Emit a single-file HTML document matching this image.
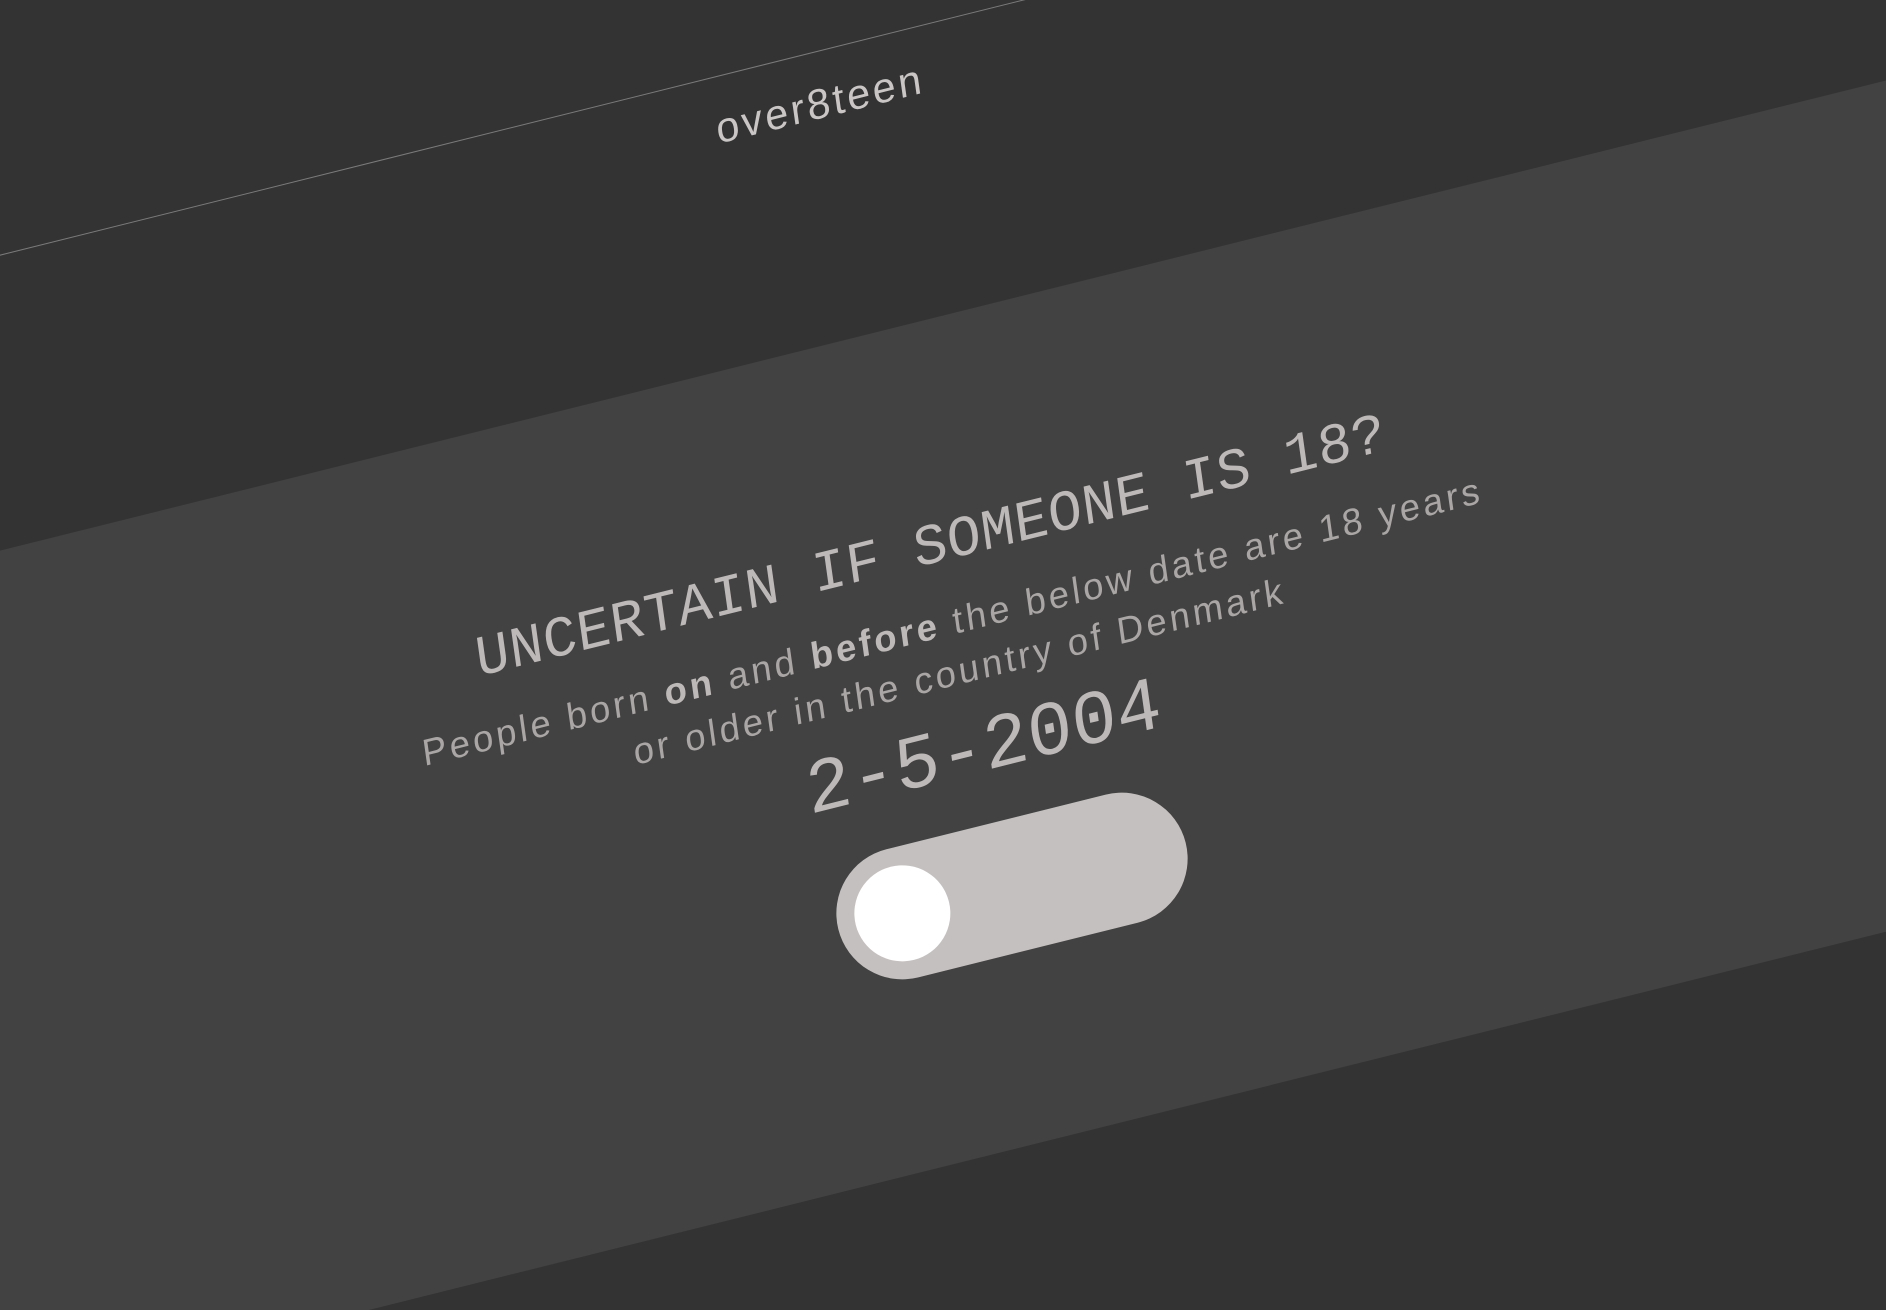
<!DOCTYPE html>
<html><head><meta charset="utf-8"><style>
html,body{margin:0;padding:0;width:1886px;height:1310px;overflow:hidden;background:#333333}
.wrap{position:relative;width:1886px;height:1310px;overflow:hidden;background:#333333}
.band{position:absolute;left:-1000px;top:800px;width:5000px;height:826px;background:#424242;transform-origin:0 0;transform:rotate(-14deg)}
.line{position:absolute;left:-1000px;top:504px;width:5000px;height:1px;background:#7a7a7a;transform-origin:0 0;transform:rotate(-14deg)}
.c{position:absolute;transform:translate(-50%,-50%) rotate(-14deg) skewX(-6deg);white-space:nowrap;text-align:center}
.logo{left:820px;top:104px;font-family:"Liberation Sans",sans-serif;font-size:42px;letter-spacing:3px;color:#c9c6c5}
.h{left:931px;top:549px;font-family:"Liberation Mono",monospace;font-size:57px;color:#bdb9b8;letter-spacing:0.5px}
.sub{left:956px;top:647px;font-family:"Liberation Sans",sans-serif;font-size:37px;letter-spacing:3.3px;line-height:50px;color:#a9a6a5}
.sub b{color:#bdb9b8}
.date{left:984px;top:750px;font-family:"Liberation Mono",monospace;font-size:76px;color:#bdb9b8}
.tog{position:absolute;left:1012px;top:886px;width:358px;height:132px;border-radius:66px;background:#c4c0bf;transform:translate(-50%,-50%) rotate(-14deg)}
.knob{position:absolute;left:18px;top:18px;width:96px;height:96px;border-radius:50%;background:#fff}
</style></head><body><div class="wrap">
<div class="band"></div>
<div class="line"></div>
<div class="c logo">over8teen</div>
<div class="c h">UNCERTAIN IF SOMEONE IS 18?</div>
<div class="c sub">People born <b>on</b> and <b>before</b> the below date are 18 years<br>or older in the country of Denmark</div>
<div class="c date">2-5-2004</div>
<div class="tog"><div class="knob"></div></div>
</div></body></html>
